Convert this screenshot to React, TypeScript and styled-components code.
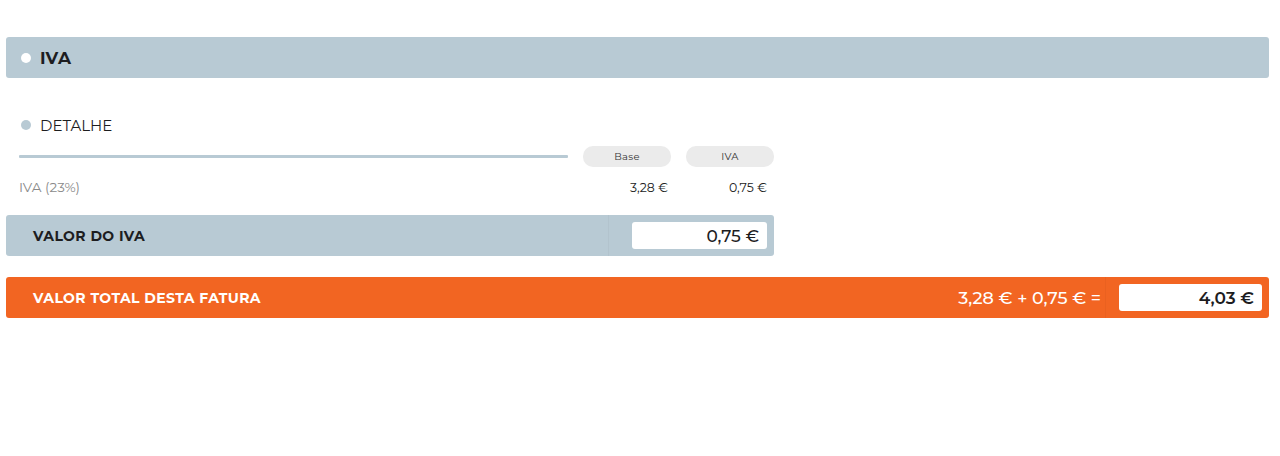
import React from 'react';
import styled, { createGlobalStyle } from 'styled-components';

const GlobalStyle = createGlobalStyle`
  html, body {
    margin: 0;
    padding: 0;
    background: #ffffff;
    font-family: 'Montserrat', Inter, 'Noto Sans', sans-serif;
    color: #1d1d1f;
  }
`;

const STEEL = '#b8cad4';
const ORANGE = '#f26522';

const Page = styled.div`
  width: 1263px;
  padding: 37px 0 0 6px;
  display: flex;
  flex-direction: column;
`;

const SectionBar = styled.div`
  height: 41px;
  background: ${STEEL};
  border-radius: 3px;
  display: flex;
  align-items: center;
  padding-left: 15px;
  gap: 9px;
`;

const Dot = styled.span<{ $color: string }>`
  width: 10px;
  height: 10px;
  border-radius: 50%;
  background: ${(p) => p.$color};
  flex: none;
`;

const SectionTitle = styled.span`
  font-size: 17px;
  font-weight: 700;
  letter-spacing: 0.3px;
`;

const Detail = styled.div`
  width: 768px;
  display: flex;
  flex-direction: column;
`;

const DetailHead = styled.div`
  display: flex;
  align-items: center;
  gap: 9px;
  padding: 37px 0 0 15px;
  height: 20px;
`;

const DetailTitle = styled.span`
  font-size: 15px;
  font-weight: 400;
`;

const ColumnsRow = styled.div`
  display: grid;
  grid-template-columns: 1fr 88px 88px;
  column-gap: 15px;
  align-items: center;
  padding: 11px 0 0 13px;
  height: 21px;
`;

const Rule = styled.div`
  height: 3px;
  background: ${STEEL};
  border-radius: 1px;
`;

const Pill = styled.div`
  height: 21px;
  border-radius: 10px;
  background: #ebebeb;
  font-size: 10px;
  letter-spacing: 0.3px;
  display: flex;
  align-items: center;
  justify-content: center;
  color: #333;
`;

const LineRow = styled.div`
  display: grid;
  grid-template-columns: 1fr 88px 88px;
  column-gap: 15px;
  align-items: center;
  padding: 11px 0 0 13px;
  height: 18px;
`;

const LineLabel = styled.span`
  font-size: 13.5px;
  color: #8a8a8a;
`;

const LineValue = styled.span<{ $pad: number }>`
  font-size: 12.5px;
  text-align: right;
  padding-right: ${(p) => p.$pad}px;
  color: #222;
`;

const TotalBar = styled.div<{ $bg: string; $color: string; $split: number; $gap: number }>`
  height: 41px;
  background: ${(p) => p.$bg};
  color: ${(p) => p.$color};
  border-radius: 3px;
  display: grid;
  grid-template-columns: 1fr auto ${(p) => p.$split}px;
  align-items: center;
  margin-top: ${(p) => p.$gap}px;
`;

const BarLabel = styled.span`
  padding-left: 27px;
  font-size: 14px;
  font-weight: 700;
  letter-spacing: 0.4px;
`;

const Formula = styled.span`
  font-size: 17.5px;
  font-weight: 500;
  padding-right: 4px;
  white-space: nowrap;
`;

const ValueCell = styled.div<{ $inset: number }>`
  height: 100%;
  display: flex;
  align-items: center;
  padding: 0 7px 0 ${(p) => p.$inset}px;
  border-left: 1px solid rgba(0, 0, 0, 0.03);
  box-sizing: border-box;
`;

const ValueBox = styled.div<{ $weight: number }>`
  flex: 1;
  height: 27px;
  background: #ffffff;
  border-radius: 3px;
  display: flex;
  align-items: center;
  justify-content: flex-end;
  padding-right: 8px;
  font-size: 17px;
  font-weight: ${(p) => p.$weight};
  color: #1d1d1f;
`;

const lines = [{ label: 'IVA (23%)', base: '3,28 €', iva: '0,75 €' }];

export default function App() {
  return (
    <>
      <GlobalStyle />
      <Page>
        <SectionBar>
          <Dot $color="#ffffff" />
          <SectionTitle>IVA</SectionTitle>
        </SectionBar>

        <Detail>
          <DetailHead>
            <Dot $color={STEEL} />
            <DetailTitle>DETALHE</DetailTitle>
          </DetailHead>
          <ColumnsRow>
            <Rule />
            <Pill>Base</Pill>
            <Pill>IVA</Pill>
          </ColumnsRow>
          {lines.map((l) => (
            <LineRow key={l.label}>
              <LineLabel>{l.label}</LineLabel>
              <LineValue $pad={3}>{l.base}</LineValue>
              <LineValue $pad={7}>{l.iva}</LineValue>
            </LineRow>
          ))}
          <TotalBar $bg={STEEL} $color="#1d1d1f" $split={166} $gap={19}>
            <BarLabel>VALOR DO IVA</BarLabel>
            <span />
            <ValueCell $inset={23}>
              <ValueBox $weight={500}>0,75 €</ValueBox>
            </ValueCell>
          </TotalBar>
        </Detail>

        <TotalBar $bg={ORANGE} $color="#ffffff" $split={164} $gap={21}>
          <BarLabel>VALOR TOTAL DESTA FATURA</BarLabel>
          <Formula>3,28 € + 0,75 € =</Formula>
          <ValueCell $inset={13}>
            <ValueBox $weight={600}>4,03 €</ValueBox>
          </ValueCell>
        </TotalBar>
      </Page>
    </>
  );
}
